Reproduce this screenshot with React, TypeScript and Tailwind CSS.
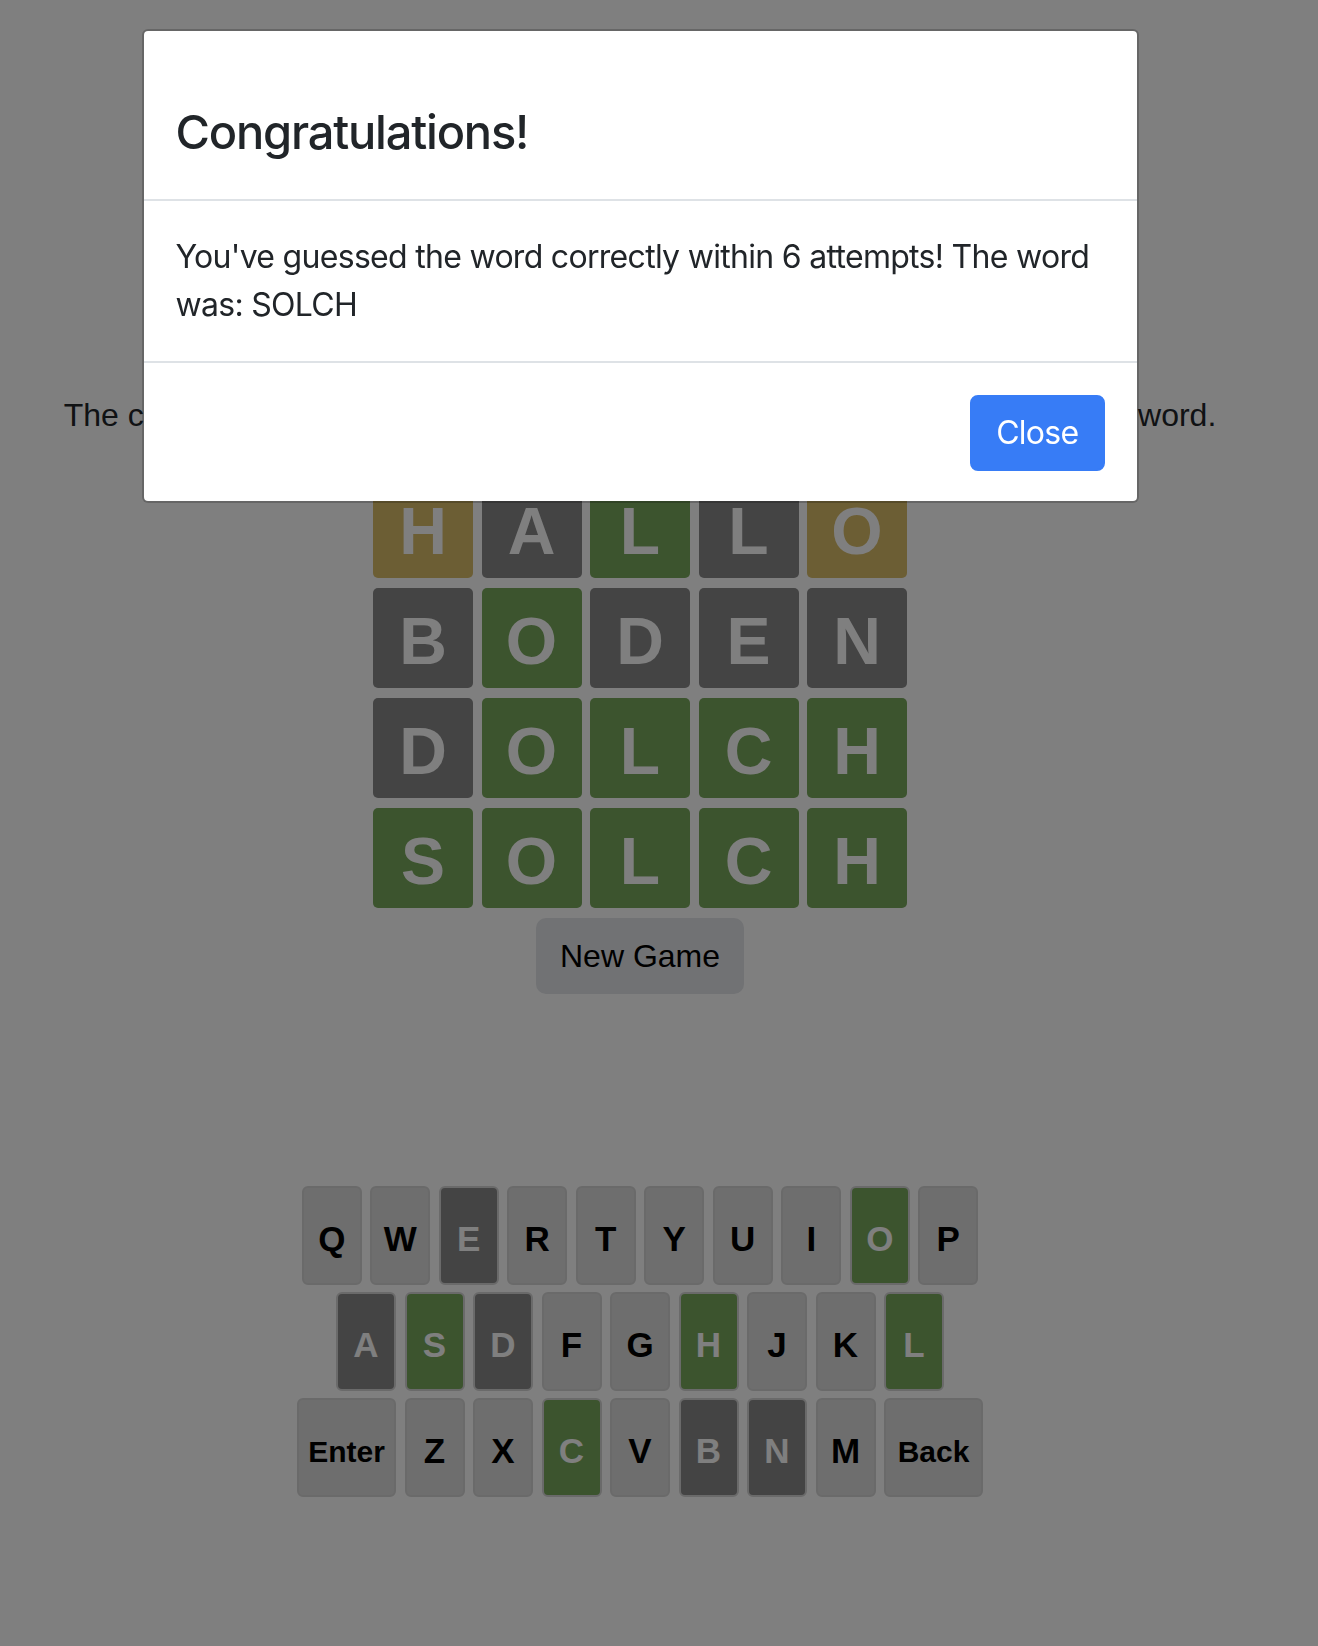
import React from 'react';

type Mark = 'hit' | 'near' | 'miss' | 'none';

const tileBg: Record<Mark, string> = {
  hit: 'bg-[#78a85c]',
  near: 'bg-[#d8bc68]',
  miss: 'bg-[#888888]',
  none: 'bg-[#dcdcdc]',
};

const guesses: { word: string; marks: Mark[] }[] = [
  { word: 'HALLO', marks: ['near', 'miss', 'hit', 'miss', 'near'] },
  { word: 'BODEN', marks: ['miss', 'hit', 'miss', 'miss', 'miss'] },
  { word: 'DOLCH', marks: ['miss', 'hit', 'hit', 'hit', 'hit'] },
  { word: 'SOLCH', marks: ['hit', 'hit', 'hit', 'hit', 'hit'] },
];

const keyState: Record<string, Mark> = {
  E: 'miss', A: 'miss', D: 'miss', B: 'miss', N: 'miss',
  O: 'hit', S: 'hit', H: 'hit', L: 'hit', C: 'hit',
};

const rows = [
  ['Q', 'W', 'E', 'R', 'T', 'Y', 'U', 'I', 'O', 'P'],
  ['A', 'S', 'D', 'F', 'G', 'H', 'J', 'K', 'L'],
  ['Enter', 'Z', 'X', 'C', 'V', 'B', 'N', 'M', 'Back'],
];

function Key({ label }: { label: string }) {
  const state = keyState[label] ?? 'none';
  const wide = label.length > 1;
  return (
    <button
      className={`h-[99px] ${wide ? 'w-[99px] text-[30px]' : 'w-[60px] text-[35px]'} ${tileBg[state]} ${
        state === 'none' ? 'text-black' : 'text-white'
      } rounded-[6px] border-2 border-[#d4d4d4] font-bold flex items-center justify-center pt-[7px]`}
    >
      {label}
    </button>
  );
}

export default function App() {
  return (
    <div className="relative min-h-[1646px] bg-white font-['Liberation_Sans',Arial,sans-serif] text-[#212529]">
      {/* game */}
      <div className="w-[1280px] flex flex-col items-center pt-[391px]">
        <p className="text-[32px] leading-[48px] whitespace-nowrap">
          The computer has chosen a word with five letters. Now you try to guess the word.
        </p>

        <div className="mt-[39px] flex flex-col gap-[10px]">
          {guesses.map((g) => (
            <div key={g.word} className="flex gap-[8.5px]">
              {g.word.split('').map((ch, i) => (
                <div
                  key={i}
                  className={`w-[100px] h-[100px] rounded-[5px] ${tileBg[g.marks[i]]} text-white text-[66px] font-bold flex items-center justify-center pt-[6px]`}
                >
                  {ch}
                </div>
              ))}
            </div>
          ))}
        </div>

        <button className="mt-[10px] h-[76px] px-[24px] rounded-[10px] bg-[#e2e4e8] text-black text-[32px] leading-[48px]">
          New Game
        </button>

        <div className="mt-[192px] flex flex-col items-center gap-[7px]">
          {rows.map((row, r) => (
            <div key={r} className="flex gap-[8.5px]">
              {row.map((k) => (
                <Key key={k} label={k} />
              ))}
            </div>
          ))}
        </div>
      </div>

      {/* modal */}
      <div className="fixed inset-0 bg-black/50">
        <div className="w-[1280px] flex justify-center pt-[29px]">
          <div className="w-[997px] bg-white bg-clip-padding border-2 border-black/20 rounded-[6px] font-['Inter',sans-serif] text-[#212529]">
            <div className="px-[32px] pt-[73px] pb-[39px] border-b-2 border-[#dee2e6]">
              <h4 className="text-[47px] leading-[1.2] font-medium tracking-[-1.2px]">Congratulations!</h4>
            </div>
            <div className="p-[32px] text-[32px] leading-[48px] tracking-[-0.7px]">
              You've guessed the word correctly within 6 attempts! The word was: SOLCH
            </div>
            <div className="px-[32px] pt-[32px] pb-[30px] border-t-2 border-[#dee2e6] flex justify-end">
              <button className="h-[76px] px-[24px] rounded-[8px] bg-[#377cf6] border-2 border-[#377cf6] text-white text-[32px] leading-[48px] tracking-[-0.7px]">
                Close
              </button>
            </div>
          </div>
        </div>
      </div>
    </div>
  );
}
